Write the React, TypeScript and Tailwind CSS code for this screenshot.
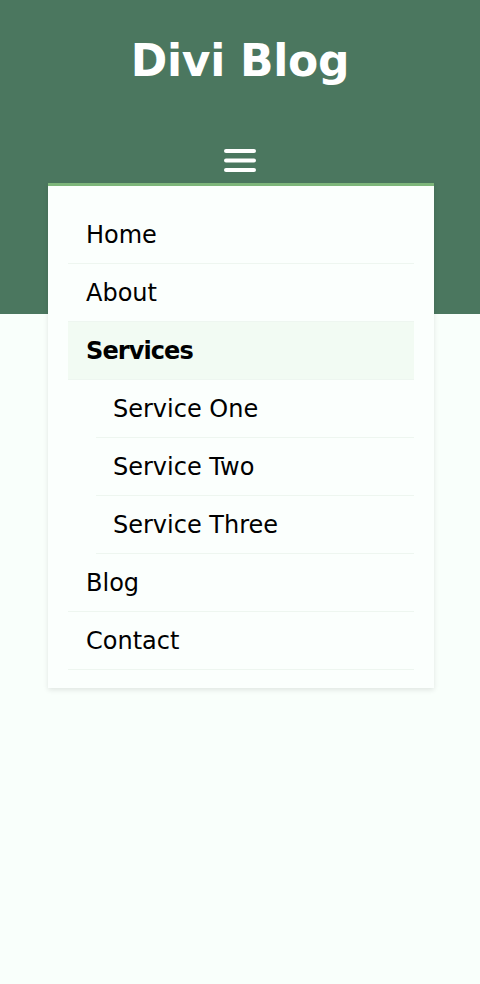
import React from 'react';

type Item = { label: string; active?: boolean; sub?: boolean };

const items: Item[] = [
  { label: 'Home' },
  { label: 'About' },
  { label: 'Services', active: true },
  { label: 'Service One', sub: true },
  { label: 'Service Two', sub: true },
  { label: 'Service Three', sub: true },
  { label: 'Blog' },
  { label: 'Contact' },
];

function Hamburger() {
  return (
    <svg width="34" height="26" viewBox="0 0 34 26" className="block">
      <g stroke="#ffffff" strokeWidth="4" strokeLinecap="round">
        <line x1="3" y1="3" x2="31" y2="3" />
        <line x1="3" y1="12.5" x2="31" y2="12.5" />
        <line x1="3" y1="22" x2="31" y2="22" />
      </g>
    </svg>
  );
}

export default function App() {
  return (
    <div
      className="relative min-h-screen bg-[#f9fffb] text-black"
      style={{ fontFamily: '"DejaVu Sans", "Noto Sans", sans-serif' }}
    >
      {/* Header */}
      <header className="h-[314px] bg-[#4b775f] flex flex-col items-center">
        <h1 className="pt-[39px] text-[44px] leading-[44px] font-bold text-white tracking-[-0.3px]">
          Divi Blog
        </h1>
        <button className="mt-[65px]" aria-label="Menu">
          <Hamburger />
        </button>
      </header>

      {/* Dropdown menu */}
      <nav className="absolute top-[183px] left-[48px] w-[386px] bg-[#fbfffd] border-t-[3px] border-[#7db67a] shadow-[0_2px_5px_rgba(0,0,0,0.1)] px-[20px] pt-[20px] pb-[18px]">
        <ul>
          {items.map((item) => (
            <li
              key={item.label}
              className={
                item.sub
                  ? 'ml-[28px] h-[58px] border-b border-[#eef6f0] flex items-center pl-[17px]'
                  : item.active
                    ? 'h-[58px] border-b border-[#eef6f0] bg-[#f2fbf3] flex items-center pl-[18px]'
                    : 'h-[58px] border-b border-[#eef6f0] flex items-center pl-[18px]'
              }
            >
              <span
                className={
                  item.active
                    ? 'text-[24px] font-bold tracking-[-0.9px]'
                    : 'text-[24px]'
                }
              >
                {item.label}
              </span>
            </li>
          ))}
        </ul>
      </nav>
    </div>
  );
}
